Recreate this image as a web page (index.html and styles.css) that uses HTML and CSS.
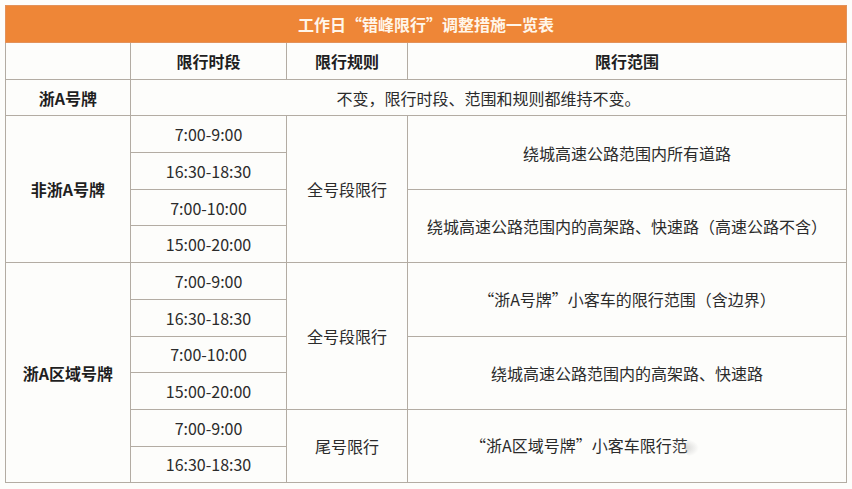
FILE: index.html
```html
<!DOCTYPE html>
<html lang="zh-CN">
<head>
<meta charset="utf-8">
<title>工作日“错峰限行”调整措施一览表</title>
<link rel="stylesheet" href="styles.css">
</head>
<body>
<table class="sheet">
  <colgroup>
    <col class="c1"><col class="c2"><col class="c3"><col class="c4">
  </colgroup>
  <tr class="row title-row"><td class="title" colspan="4">工作日“错峰限行”调整措施一览表</td></tr>
  <tr class="row"><th></th><th>限行时段</th><th>限行规则</th><th>限行范围</th></tr>
  <tr class="row"><th>浙A号牌</th><td colspan="3">不变，限行时段、范围和规则都维持不变。</td></tr>
  <tr class="row"><th rowspan="4">非浙A号牌</th><td class="time">7:00-9:00</td><td rowspan="4">全号段限行</td><td rowspan="2">绕城高速公路范围内所有道路</td></tr>
  <tr class="row"><td class="time">16:30-18:30</td></tr>
  <tr class="row"><td class="time">7:00-10:00</td><td rowspan="2">绕城高速公路范围内的高架路、快速路（高速公路不含）</td></tr>
  <tr class="row"><td class="time">15:00-20:00</td></tr>
  <tr class="row"><th rowspan="6">浙A区域号牌</th><td class="time">7:00-9:00</td><td rowspan="4">全号段限行</td><td rowspan="2">“浙A号牌”小客车的限行范围（含边界）</td></tr>
  <tr class="row"><td class="time">16:30-18:30</td></tr>
  <tr class="row"><td class="time">7:00-10:00</td><td rowspan="2">绕城高速公路范围内的高架路、快速路</td></tr>
  <tr class="row"><td class="time">15:00-20:00</td></tr>
  <tr class="row"><td class="time">7:00-9:00</td><td rowspan="2">尾号限行</td><td rowspan="2" class="cut"><span>“浙A区域号牌”小客车限行</span><span class="fade">范</span><span class="smudge"></span></td></tr>
  <tr class="row"><td class="time">16:30-18:30</td></tr>
</table>
</body>
</html>
```

FILE: styles.css
```css
html, body {
  margin: 0;
  padding: 0;
  background: #fdfdfb;
}
body {
  padding: 5px 0 0 5px;
  font-family: "Noto Sans CJK SC", "Noto Sans", sans-serif;
  color: #2b2b2b;
}
.sheet {
  border-collapse: collapse;
  table-layout: fixed;
  width: 841px;
  background: #fdfdfb;
}
.c1 { width: 125px; }
.c2 { width: 156px; }
.c3 { width: 121px; }
.c4 { width: 439px; }
.row { height: 36.7px; }
.title-row { height: 37px; }
.sheet td, .sheet th {
  border: 1px solid #b3aca3;
  padding: 0;
  text-align: center;
  vertical-align: middle;
  font-size: 16px;
  line-height: 20px;
  font-weight: 400;
  color: #2b2b2b;
}
.sheet th {
  font-weight: 700;
  color: #1f1f1f;
}
.sheet .title {
  background: #ee8637;
  color: #fff6ea;
  font-weight: 700;
  border-color: #e3925a;
}
.sheet .time {
  font-size: 16px;
}
.sheet .cut {
  text-align: left;
  padding-left: 62px;
  white-space: nowrap;
}
.fade {
  color: #3a3a3a;
}
.smudge {
  display: inline-block;
  width: 14px;
  height: 18px;
  vertical-align: middle;
  margin-left: -3px;
  border-radius: 50%;
  background: radial-gradient(ellipse at left center, rgba(140,140,140,0.35), rgba(255,255,255,0) 70%);
}
```
